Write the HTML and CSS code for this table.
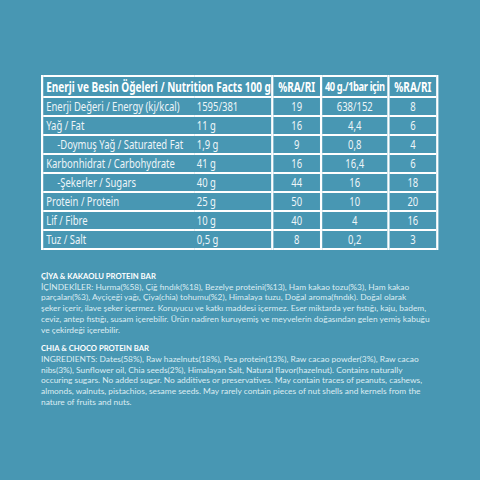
FILE: index.html
```html
<!DOCTYPE html>
<html lang="tr">
<head>
    <meta charset="UTF-8">
    <meta name="viewport" content="width=device-width, initial-scale=1.0">
    <title>Çiya &amp; Kakaolu Protein Bar</title>
    <link rel="stylesheet" href="styles.css">
</head>
<body>
    <div class="sheet">
        <!-- no condensed face offline, so the table is laid out wide and squeezed -->
        <table class="facts">
            <colgroup>
                <col class="col-label">
                <col class="col-value">
                <col class="col-pct">
                <col class="col-bar">
                <col class="col-pct">
            </colgroup>
            <thead>
                <tr>
                    <th colspan="2" class="title">Enerji ve Besin Öğeleri / Nutrition Facts 100 g</th>
                    <th>%RA/RI</th>
                    <th class="tight">40 g./1bar için</th>
                    <th>%RA/RI</th>
                </tr>
            </thead>
            <tbody>
                <tr>
                    <td class="label">Enerji Değeri / Energy (kj/kcal)</td>
                    <td class="value">1595/381</td>
                    <td>19</td>
                    <td>638/152</td>
                    <td>8</td>
                </tr>
                <tr>
                    <td class="label">Yağ / Fat</td>
                    <td class="value">11 g</td>
                    <td>16</td>
                    <td>4,4</td>
                    <td>6</td>
                </tr>
                <tr>
                    <td class="label sub">-Doymuş Yağ / Saturated Fat</td>
                    <td class="value">1,9 g</td>
                    <td>9</td>
                    <td>0,8</td>
                    <td>4</td>
                </tr>
                <tr>
                    <td class="label">Karbonhidrat / Carbohydrate</td>
                    <td class="value">41 g</td>
                    <td>16</td>
                    <td>16,4</td>
                    <td>6</td>
                </tr>
                <tr>
                    <td class="label sub">-Şekerler / Sugars</td>
                    <td class="value">40 g</td>
                    <td>44</td>
                    <td>16</td>
                    <td>18</td>
                </tr>
                <tr>
                    <td class="label">Protein / Protein</td>
                    <td class="value">25 g</td>
                    <td>50</td>
                    <td>10</td>
                    <td>20</td>
                </tr>
                <tr>
                    <td class="label">Lif / Fibre</td>
                    <td class="value">10 g</td>
                    <td>40</td>
                    <td>4</td>
                    <td>16</td>
                </tr>
                <tr>
                    <td class="label">Tuz / Salt</td>
                    <td class="value">0,5 g</td>
                    <td>8</td>
                    <td>0,2</td>
                    <td>3</td>
                </tr>
            </tbody>
        </table>

        <div class="notes">
            <div class="note">
                <h3>ÇİYA &amp; KAKAOLU PROTEIN BAR</h3>
                <p>İÇİNDEKİLER: Hurma(%58), Çiğ fındık(%18), Bezelye proteini(%13), Ham kakao tozu(%3), Ham kakao<br>
                parçaları(%3), Ayçiçeği yağı, Çiya(chia) tohumu(%2), Himalaya tuzu, Doğal aroma(fındık). Doğal olarak<br>
                şeker içerir, ilave şeker içermez. Koruyucu ve katkı maddesi içermez. Eser miktarda yer fıstığı, kaju, badem,<br>
                ceviz, antep fıstığı, susam içerebilir. Ürün nadiren kuruyemiş ve meyvelerin doğasından gelen yemiş kabuğu<br>
                ve çekirdeği içerebilir.</p>
            </div>
            <div class="note">
                <h3>CHIA &amp; CHOCO PROTEIN BAR</h3>
                <p>INGREDIENTS: Dates(58%), Raw hazelnuts(18%), Pea protein(13%), Raw cacao powder(3%), Raw cacao<br>
                nibs(3%), Sunflower oil, Chia seeds(2%), Himalayan Salt, Natural flavor(hazelnut). Contains naturally<br>
                occuring sugars. No added sugar. No additives or preservatives. May contain traces of peanuts, cashews,<br>
                almonds, walnuts, pistachios, sesame seeds. May rarely contain pieces of nut shells and kernels from the<br>
                nature of fruits and nuts.</p>
            </div>
        </div>
    </div>
</body>
</html>
```

FILE: styles.css
```css
body {
    margin: 0;
    padding: 0;
    background-color: #4897b3;
    color: #fff;
    overflow: hidden;
}

.sheet {
    width: 480px;
    height: 480px;
    box-sizing: border-box;
    padding: 75px 0 0 41px;
}

/* Nutrition table: 534px wide, squeezed to 395px */
.facts {
    border-collapse: collapse;
    width: 534px;
    table-layout: fixed;
    transform: scaleX(0.74);
    transform-origin: left top;
    font-family: "Noto Sans", "Open Sans", sans-serif;
    font-size: 12.8px;
    color: #eef5f8;
}

.col-label { width: 205px; }
.col-value { width: 106px; }
.col-pct { width: 66px; }
.col-bar { width: 91px; }

.facts th,
.facts td {
    border-style: solid;
    border-color: #fff;
    border-width: 2px 3px;
    padding: 0;
    text-align: center;
    white-space: nowrap;
    overflow: hidden;
}

.facts th {
    height: 19px;
    font-size: 13.5px;
    font-weight: bold;
    color: #fff;
}

.facts th.tight {
    font-size: 12.6px;
    letter-spacing: -0.5px;
}

.facts td {
    height: 17px;
    line-height: 17px;
}

.facts th.title {
    text-align: left;
    padding-left: 4px;
}

.facts td.label {
    text-align: left;
    padding-left: 4px;
    border-right: none;
}

.facts td.label.sub {
    padding-left: 19px;
}

.facts td.value {
    text-align: left;
    padding-left: 4px;
    border-left: none;
}

/* Ingredient notes */
.notes {
    margin-top: 21px;
    font-family: Lato, "Open Sans", sans-serif;
    font-size: 8.4px;
    line-height: 10.7px;
    width: 420px;
    white-space: nowrap;
}

.note {
    margin-bottom: 8px;
}

.note h3 {
    margin: 0;
    font-size: 7.7px;
    font-weight: bold;
    color: #fff;
}

.note p {
    margin: 0;
    color: #dcecf2;
}
```
